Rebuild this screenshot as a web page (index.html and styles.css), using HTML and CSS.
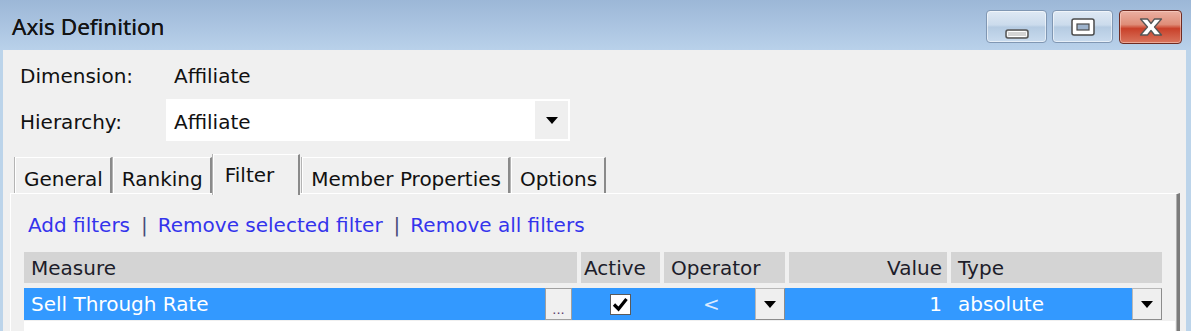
FILE: index.html
```html
<!DOCTYPE html>
<html>

	<head>
		<meta charset="UTF-8">
		<title>Axis Definition</title>
		<link rel="stylesheet" href="styles.css">
	</head>

	<body>
		<div class="window">
			<div class="titlebar">
				<span class="title">Axis Definition</span>
				<div class="caption-btns">
					<span class="cap-btn cap-min">
						<svg width="24" height="10" viewBox="0 0 24 10"><rect x="1" y="1" width="22" height="8" rx="2" fill="#d4d4d4" stroke="#555" stroke-width="1.5"/><rect x="2.5" y="2.5" width="19" height="5" rx="1" fill="none" stroke="#fff" stroke-width="1"/></svg>
					</span>
					<span class="cap-btn cap-max">
						<svg width="24" height="18" viewBox="0 0 24 18"><rect x="1" y="1" width="22" height="16" rx="2" fill="#fff" stroke="#4a4a4a" stroke-width="1.5"/><rect x="6" y="6" width="12" height="6" fill="#9eb3cc" stroke="#4a4a4a" stroke-width="1.2"/></svg>
					</span>
					<span class="cap-btn cap-close">
						<svg width="26" height="20" viewBox="0 0 26 20"><path d="M2.5 2 L9.5 2 L13 6.5 L16.5 2 L23.5 2 L16.5 10 L23.5 18 L16.5 18 L13 13.5 L9.5 18 L2.5 18 L9.5 10 Z" fill="#fff" stroke="#555" stroke-width="1.3" stroke-linejoin="round"/></svg>
					</span>
				</div>
			</div>

			<div class="client">
				<div class="field field-dim">
					<span class="field-label">Dimension:</span>
					<span class="field-value">Affiliate</span>
				</div>
				<div class="field field-hier">
					<span class="field-label">Hierarchy:</span>
					<div class="combo">
						<span class="combo-text">Affiliate</span>
						<span class="combo-btn"><svg width="12" height="7" viewBox="0 0 12 7"><polygon points="0,0 12,0 6,7" fill="#000"/></svg></span>
					</div>
				</div>

				<div class="tabs">
					<span class="tab">General</span>
					<span class="tab">Ranking</span>
					<span class="tab tab-on">Filter</span>
					<span class="tab">Member Properties</span>
					<span class="tab">Options</span>
				</div>

				<div class="panel">
					<div class="links">
						<a href="javascript:">Add filters</a><span class="sep">|</span><a href="javascript:">Remove selected filter</a><span class="sep">|</span><a href="javascript:">Remove all filters</a>
					</div>
					<div class="grid">
						<div class="grid-line grid-head">
							<span class="cell">Measure</span>
							<span class="cell c-active">Active</span>
							<span class="cell">Operator</span>
							<span class="cell c-value">Value</span>
							<span class="cell">Type</span>
						</div>
						<div class="grid-line grid-row">
							<span class="cell c-measure">Sell Through Rate<span class="dots-btn">...</span></span>
							<span class="cell c-check"><svg width="21" height="21" viewBox="0 0 21 21"><rect x="0.5" y="0.5" width="20" height="20" fill="#fff" stroke="#5a5a5a"/><path d="M4 10.5 L8.5 15 L16.5 5" fill="none" stroke="#000" stroke-width="3.2"/></svg></span>
							<span class="cell c-op"><span class="op-text">&lt;</span><span class="drop-btn"><svg width="12" height="7" viewBox="0 0 12 7"><polygon points="0,0 12,0 6,7" fill="#000"/></svg></span></span>
							<span class="cell c-value">1</span>
							<span class="cell c-type"><span class="type-text">absolute</span><span class="drop-btn"><svg width="12" height="7" viewBox="0 0 12 7"><polygon points="0,0 12,0 6,7" fill="#000"/></svg></span></span>
						</div>
						<div class="grid-empty"></div>
					</div>
				</div>
			</div>
		</div>
	</body>

</html>
```

FILE: styles.css
```css
body {
	margin: 0;
	background-color: #bcd4ea;
	font-family: "DejaVu Sans", Verdana, sans-serif;
	font-size: 20px;
	color: #111;
}

.window {
	width: 1191px;
	height: 331px;
	overflow: hidden;
}

/* 标题栏 */
.titlebar {
	height: 50px;
	display: flex;
	justify-content: space-between;
	background: linear-gradient(#9cb7d7, #b9d1ea);
}

.title {
	margin: 12px 0 0 12px;
	line-height: 30px;
	font-family: "Noto Sans", "Open Sans", sans-serif;
	font-size: 22.5px;
	color: #141414;
	text-shadow: 0 0 .4px #141414;
}

.caption-btns {
	display: flex;
	align-items: flex-start;
	margin: 10px 9px 0 0;
}

.cap-btn {
	display: flex;
	align-items: center;
	justify-content: center;
	box-sizing: border-box;
	width: 61px;
	height: 33px;
	margin-left: 5px;
	border: 1px solid #8097b3;
	border-radius: 4px;
	background: linear-gradient(#dfe9f4 0%, #cbdbec 45%, #b5cbe2 52%, #c9dbee 100%);
	box-shadow: inset 0 0 0 1px rgba(255, 255, 255, .55);
}

.cap-min svg {
	margin-top: 14px;
}

.cap-close {
	width: 63px;
	height: 34px;
	margin-left: 6px;
	border-color: #6f2b22;
	background: linear-gradient(#eab0a2 0%, #df8d78 42%, #c9412a 55%, #d9755e 100%);
	box-shadow: inset 0 0 0 1px rgba(255, 220, 210, .5);
}

/* 客户区 */
.client {
	margin-left: 3px;
	padding-top: 13px;
	width: 1183px;
	height: 268px;
	background-color: #f0f0f0;
}

.field {
	display: flex;
	align-items: center;
	padding-left: 17px;
}

.field-label {
	width: 146px;
}

.field-dim {
	height: 26px;
	line-height: 26px;
}

.field-dim .field-label {
	width: 154px;
}

.field-hier {
	margin-top: 10px;
}

.field-hier .field-label {
	margin-top: 3px;
}

.combo {
	display: flex;
	align-items: center;
	justify-content: space-between;
	box-sizing: border-box;
	width: 404px;
	height: 42px;
	padding: 2px;
	background-color: #fff;
}

.combo-text {
	padding: 3px 0 0 6px;
}

.combo-btn {
	display: flex;
	align-items: center;
	justify-content: center;
	width: 33px;
	height: 38px;
	background-color: #efefef;
}

/* 选项卡 */
.tabs {
	display: flex;
	align-items: flex-end;
	height: 40px;
	margin: 12px 0 0 12px;
	position: relative;
	z-index: 1;
}

.tab {
	box-sizing: border-box;
	height: 36px;
	padding: 6px 7px 0 8px;
	margin-right: 1px;
	line-height: 30px;
	border-left: 1px solid #fff;
	border-top: 1px solid #fff;
	border-right: 2px solid #8a8a8a;
	box-shadow: -1px 0 0 #b4b4b4;
	background-color: #f0f0f0;
}

.tab-on {
	height: 41px;
	margin-bottom: -2px;
	padding: 5px 24px 0 11px;
	margin-right: 2px;
}

/* 面板 */
.panel {
	box-sizing: border-box;
	width: 1170px;
	height: 200px;
	margin-left: 7px;
	padding: 18px 0 0 13px;
	border-top: 1px solid #fff;
	border-left: 1px solid #fff;
	border-right: 3px solid #7b7b7b;
	box-shadow: inset -1px 0 0 #b0b0b0;
}

.links {
	height: 26px;
	padding-left: 4px;
	line-height: 26px;
}

.links a {
	color: #3434ec;
	text-decoration: none;
}

.sep {
	margin: 0 10px 0 11px;
	color: #4a4a7a;
}

.grid {
	margin-top: 14px;
}

.grid-line {
	display: grid;
	grid-template-columns: 553px 79px 121px 158px 211px;
	column-gap: 4px;
	width: 1138px;
}

.cell {
	display: flex;
	align-items: center;
	padding: 0 7px;
	white-space: nowrap;
}

.grid-head {
	height: 31px;
	margin-bottom: 5px;
}

.grid-head .cell {
	background-color: #d4d4d4;
	color: #1d1d2a;
}

.grid-head .c-active {
	padding-left: 3px;
}

.c-value {
	justify-content: flex-end;
	padding-right: 5px;
}

.grid-row {
	height: 32px;
	background-color: #3399ff;
	color: #fff;
}

.c-measure {
	justify-content: space-between;
	padding-right: 5px;
}

.dots-btn {
	display: flex;
	align-items: flex-end;
	justify-content: center;
	box-sizing: border-box;
	width: 27px;
	height: 32px;
	padding-bottom: 2px;
	border: 1px solid #a0a0a0;
	background-color: #f0f0f0;
	font-size: 13px;
	line-height: 14px;
	color: #5a3a6a;
}

.c-check {
	justify-content: center;
	padding: 0;
}

.c-op,
.c-type {
	justify-content: space-between;
	padding-right: 0;
}

.op-text {
	padding-left: 32px;
	color: #dce9ff;
}

.drop-btn {
	display: flex;
	align-items: center;
	justify-content: center;
	box-sizing: border-box;
	width: 30px;
	height: 32px;
	border: 1px solid #8c8c8c;
	border-top-color: #b8b8b8;
	border-left-color: #b8b8b8;
	background-color: #efefef;
}

.grid-empty {
	width: 1151px;
	height: 30px;
	margin-top: 1px;
	background-color: #fff;
}
```
